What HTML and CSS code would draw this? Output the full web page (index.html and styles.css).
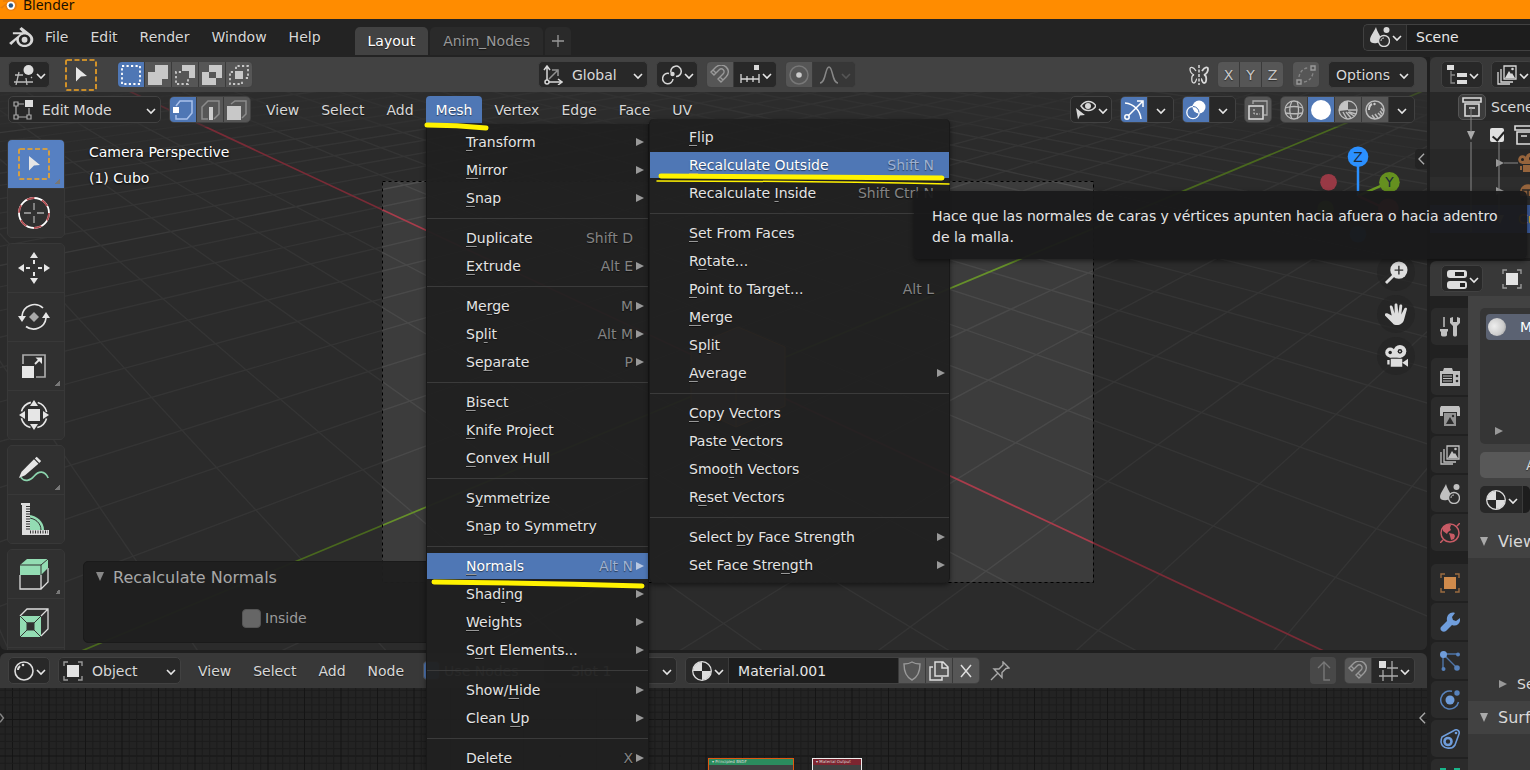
FILE: index.html
```html
<!DOCTYPE html>
<html lang="en">
<head>
    <meta charset="UTF-8">
    <meta name="viewport" content="width=device-width, initial-scale=1.0">
    <title>Blender</title>
    <link rel="stylesheet" href="styles.css">
</head>
<body>

    <!-- icon sprite -->
    <svg class="sprite" aria-hidden="true">
        <symbol id="chev" viewBox="0 0 10 20"><path d="M1 9l4 4 4-4" fill="none" stroke="currentColor" stroke-width="1.600"/></symbol>
        <symbol id="logo" viewBox="0 0 24 24"><path d="M1 17.500L11 9.500H4.500V7.500h9L10.500 4.500l2-1.800 8.200 6.500c2 1.700 3 3.700 2.600 6-.6 3.600-4 6-8 6-4.200 0-7.500-2.700-7.700-6.500L3 19.300zM15.300 9.800c-3 0-5.300 2-5.300 4.700s2.400 4.700 5.300 4.700 5.300-2 5.300-4.700-2.400-4.700-5.300-4.700z" fill="currentColor" fill-rule="evenodd"/><circle cx="15.300" cy="14.500" r="2.700" fill="currentColor"/></symbol>
        <symbol id="view3d" viewBox="0 0 20 20"><g fill="none" stroke="#bbb" stroke-width="1.300"><path d="M1 10h8M0 17h19M5 7L2 20M12 13l1 7M17 12l1 1"/></g><circle cx="14.500" cy="5" r="5" fill="#ddd"/></symbol>
        <symbol id="selbox" viewBox="0 0 32 32"><rect x="1" y="1" width="30" height="30" rx="1" fill="none" stroke="#f5a623" stroke-width="1.600" stroke-dasharray="5 2.500"/><path d="M11 8l11 9-6 .4-5 5z" fill="#e6e6e6"/></symbol>
        <symbol id="m-new" viewBox="0 0 20 20"><rect x="1" y="1" width="18" height="18" fill="none" stroke="#fff" stroke-width="1.800" stroke-dasharray="2.200 2.300"/></symbol>
        <symbol id="m-add" viewBox="0 0 20 20"><path d="M7 0h13v14h-6v6H0V7h7z" fill="currentColor"/></symbol>
        <symbol id="m-sub" viewBox="0 0 20 20"><path d="M7 0h13v13h-6V6H7z" fill="currentColor"/><path d="M6 7H1v12h12v-5" fill="none" stroke="currentColor" stroke-width="1.800" stroke-dasharray="2.200 2.300"/></symbol>
        <symbol id="m-dif" viewBox="0 0 20 20"><path d="M7 0h13v13h-6v7H0V7h7zM7 7v6h7V7z" fill="currentColor" fill-rule="evenodd"/></symbol>
        <symbol id="m-int" viewBox="0 0 20 20"><path d="M6 6h8v8H6z" fill="currentColor"/><path d="M7 4V1h12v12h-3M4 7H1v12h12v-3" fill="none" stroke="currentColor" stroke-width="1.800" stroke-dasharray="2.200 2.300"/></symbol>
        <symbol id="orient" viewBox="0 0 20 20"><g fill="none" stroke="currentColor" stroke-width="1.500"><path d="M4 15V2M1 5l3-4 3 4M6 17h12M15 14l4 3-4 3"/><circle cx="4" cy="17" r="2"/><path d="M6 14l8-8M9 5h6v6" opacity=".6"/></g></symbol>
        <symbol id="pivot" viewBox="0 0 20 20"><g fill="none" stroke="currentColor" stroke-width="1.500"><path d="M9 7.500A5.200 5.200 0 1 1 14 11.500"/><path d="M7 8.500A5.200 5.200 0 1 0 11 14"/></g><circle cx="10.500" cy="9" r="2.200" fill="currentColor"/></symbol>
        <symbol id="magnet" viewBox="0 0 20 20"><path d="M1 7l3 3 5-5c3-3 7 1 4 4l-5 5 3 3 5-5c7-7-3-16-10-10zM3 5l3 3M10 12l3 3" fill="none" stroke="#999" stroke-width="1.400"/></symbol>
        <symbol id="incr" viewBox="0 0 20 20"><path d="M1 9v9M19 9v9M7 11v6M13 11v6M1 14h18" stroke="currentColor" stroke-width="1.300"/><path d="M14 0h5v5h-5z" fill="currentColor"/></symbol>
        <symbol id="prop" viewBox="0 0 20 20"><circle cx="10" cy="10" r="9" fill="none" stroke="#777" stroke-width="1.500"/><circle cx="10" cy="10" r="2.800" fill="#ccc"/></symbol>
        <symbol id="falloff" viewBox="0 0 20 20"><path d="M1 18c6 0 5-16 9-16s3 16 9 16" fill="none" stroke="currentColor" stroke-width="1.500"/></symbol>
        <symbol id="butterfly" viewBox="0 0 20 20"><path d="M7 6C4 1 1 2 1 4c0 4 2 5 4 6-3 0-3 8 0 8 2 0 2-4 3-4" fill="none" stroke="currentColor" stroke-width="1.300"/><path d="M13 6c3-5 6-4 6-2 0 4-2 5-4 6 3 0 3 8 0 8-2 0-2-4-3-4" fill="none" stroke="currentColor" stroke-width="1.800"/><path d="M10 0v20" stroke="currentColor" stroke-width="1.500" stroke-dasharray="3 1.500"/></symbol>
        <symbol id="automerge" viewBox="0 0 20 20"><g fill="none" stroke="#999" stroke-width="1.400"><path d="M1 15h4v4H1zM15 1h4v4h-4z"/><path d="M3 12C4 6 8 3 12 3M8 17c5-1 8-4 9-9" stroke-dasharray="3 2" opacity=".7"/></g></symbol>
        <symbol id="editmode" viewBox="0 0 20 20"><g fill="none" stroke="#aaa" stroke-width="1.200"><path d="M1 2h4v4H1zM1 15h4v4H1zM14 15h4v4h-4zM3 6v9M5 17h9M5 4h6M16 8v7"/></g><path d="M12 0h8v7h-8z" fill="#ddd"/></symbol>
        <symbol id="vert" viewBox="0 0 20 20"><path d="M3 6l4-5h12v12l-5 6H3v-4" fill="none" stroke="#a9c1ea" stroke-width="1.500"/><path d="M0 7h6v6H0z" fill="#fff"/></symbol>
        <symbol id="edge" viewBox="0 0 20 20"><path d="M8 19H2V7l6-6h11v13l-5 5" fill="none" stroke="#8c8c8c" stroke-width="1.500"/><path d="M9 7h4v13H9z" fill="#ccc"/></symbol>
        <symbol id="face" viewBox="0 0 20 20"><path d="M4 4l4-3h11v13l-4 4" fill="none" stroke="#8c8c8c" stroke-width="1.500"/><path d="M0 6h14v14H0z" fill="#c8c8c8"/></symbol>
        <symbol id="eye" viewBox="0 0 20 20"><path d="M5 6c4-6 11-6 15 0-4 6-11 6-15 0z" fill="none" stroke="currentColor" stroke-width="1.500"/><circle cx="12" cy="6" r="3" fill="currentColor"/><path d="M0 8l9 7-5 .5-2 4z" fill="currentColor"/></symbol>
        <symbol id="gizmo" viewBox="0 0 20 20"><g fill="none" stroke="#fff" stroke-width="1.500"><path d="M1 3c9 1 15 7 16 16M4 16L18 2M13 1h6v6"/><circle cx="3" cy="17" r="2.200"/></g></symbol>
        <symbol id="overlay" viewBox="0 0 20 20"><circle cx="13" cy="7" r="6.500" fill="#fff"/><circle cx="7" cy="12.500" r="6.200" fill="none" stroke="#fff" stroke-width="1.300"/><path d="M7 6.500a6 6 0 0 1 6 6" stroke="#4772b3" fill="none"/></symbol>
        <symbol id="xray" viewBox="0 0 20 20"><path d="M1 6h14v13H1z" fill="none" stroke="#ddd" stroke-width="1.500"/><path d="M5 4V1h14v14h-3" fill="none" stroke="#aaa" stroke-width="1.300"/><path d="M6 9v5h6" fill="none" stroke="#ddd" stroke-dasharray="2 1.500"/></symbol>
        <symbol id="wire" viewBox="0 0 20 20"><g fill="none" stroke="#bbb" stroke-width="1.300"><circle cx="10" cy="10" r="9"/><path d="M8 1c-3 6-3 12 0 18M1 8c6-2 12-2 18 0M13 1c2 6 2 12 0 18M1 13c6 1 12 1 18 0"/></g></symbol>
        <symbol id="solid" viewBox="0 0 20 20"><circle cx="10" cy="10" r="10" fill="#fff"/></symbol>
        <symbol id="matprev" viewBox="0 0 20 20"><circle cx="10" cy="10" r="9" fill="none" stroke="#bbb" stroke-width="1.300"/><path d="M10 10V1a9 9 0 0 0-9 10z" fill="#c4c4c4"/><path d="M10 10h9M11 12l7 2M10 12l6 4M8 12l5 6M5 12l4 7" fill="none" stroke="#bbb" stroke-width="1.500"/></symbol>
        <symbol id="rendered" viewBox="0 0 20 20"><circle cx="10" cy="10" r="9" fill="none" stroke="#bbb" stroke-width="1.500"/><path d="M4 10c0-3 1-5 3-6" fill="none" stroke="#ccc" stroke-width="2"/><circle cx="9.500" cy="4" r="1.200" fill="#ccc"/><path d="M16 8l2 3M15 11l2 3M13 13l3 3M10 14l3 4M7 15l3 4" fill="none" stroke="#bbb" stroke-width="1.500"/></symbol>
        <symbol id="sphere" viewBox="0 0 20 20"><circle cx="10" cy="10" r="9" fill="none" stroke="#ddd" stroke-width="1.600"/><path d="M4 9c0-2 1-3 2-4" fill="none" stroke="#ddd" stroke-width="2"/><circle cx="9" cy="4" r="1.300" fill="#ddd"/></symbol>
        <symbol id="object" viewBox="0 0 20 20"><path d="M4 4h12v12H4z" fill="#e2e2e2"/><path d="M1 5V1h4M15 1h4v4M19 15v4h-4M5 19H1v-4" fill="none" stroke="#999" stroke-width="1.400"/></symbol>
        <symbol id="material" viewBox="0 0 20 20"><circle cx="10" cy="10" r="9.300" fill="none" stroke="#ddd" stroke-width="1.300"/><path d="M10 1v9H1a9 9 0 0 1 9-9zM10 10h9a9 9 0 0 1-9 9z" fill="#ddd"/></symbol>
        <symbol id="scene" viewBox="0 0 20 20"><path d="M6 0c1 5 5 9 5 12 0 5-11 6-11 1C0 9 4 5 6 0z" fill="currentColor"/><circle cx="16.500" cy="3" r="3" fill="currentColor"/><circle cx="14" cy="14" r="5.500" fill="#2b2b2b" stroke="currentColor" stroke-width="1.400"/><path d="M11 14c0-2 1-3 3-3" stroke="currentColor" fill="none"/></symbol>
        <symbol id="shield" viewBox="0 0 20 20"><path d="M10 1c3 2 6 2 8 2 0 8-2 13-8 16C4 16 2 11 2 3c2 0 5 0 8-2z" fill="none" stroke="#999" stroke-width="1.400"/></symbol>
        <symbol id="copy" viewBox="0 0 20 20"><g fill="none" stroke="#ddd" stroke-width="1.500"><path d="M6 1h8l5 5v9H6zM13 1v6h6"/><path d="M4 6H1v13h12v-3"/></g></symbol>
        <symbol id="close" viewBox="0 0 20 20"><path d="M5 4l10 12M15 4L5 16" stroke="#ddd" stroke-width="1.500"/></symbol>
        <symbol id="pin" viewBox="0 0 20 20"><path d="M13 1l6 6-3 .5-4 4 0 5L4 8l5 0 4-4zM8 12l-7 7" fill="none" stroke="#aaa" stroke-width="1.400"/></symbol>
        <symbol id="up" viewBox="0 0 20 20"><path d="M17 19h-6V1M5 7l6-6 6 6" fill="none" stroke="#777" stroke-width="1.400"/></symbol>
        <symbol id="gridsnap" viewBox="0 0 20 20"><path d="M1 15h19M9 7h11M5 9v11M14 0v20" stroke="#aaa" stroke-width="1.300"/><path d="M1 0h7v7H1z" fill="#ddd"/></symbol>
        <symbol id="tree" viewBox="0 0 20 20"><path d="M0 0h7v5H0zM10 8h10v4H10zM10 15h10v4H10z" fill="#ddd"/><path d="M4 6v12h4M4 10h4" fill="none" stroke="#888" stroke-width="1.300"/></symbol>
        <symbol id="images" viewBox="0 0 20 20"><path d="M7 1h12v13H7zM4 4v13h12M1 7v12h12" fill="none" stroke="currentColor" stroke-width="1.300"/><path d="M8 13l4-7 2 3 1-1 3 5z" fill="currentColor"/><circle cx="15.500" cy="4" r="1.300" fill="currentColor"/></symbol>
        <symbol id="box" viewBox="0 0 20 20"><path d="M1 1h18v4H1zM3 7h14v12H3zM7 11h6" fill="none" stroke="#ddd" stroke-width="1.600"/></symbol>
        <symbol id="camera" viewBox="0 0 20 20"><path d="M5 12h10v7H5zM2 13h2v4H2zM20 12v7l-5-3.500z" fill="currentColor"/><circle cx="4.500" cy="6.500" r="4.300" fill="currentColor"/><circle cx="13" cy="5.500" r="5.500" fill="currentColor"/><path d="M4 7h10v4H4z" fill="currentColor"/><circle cx="4.500" cy="6.500" r="1.500" fill="#222"/><circle cx="13" cy="5.500" r="2" fill="#222"/><circle cx="13" cy="5.500" r=".8" fill="currentColor"/></symbol>
        <symbol id="light" viewBox="0 0 20 20"><path d="M3 15a8 8 0 1 1 14 0H3z" fill="currentColor"/><path d="M4 9h12M10 9v6M6 18h8" stroke="#282828" stroke-width="1.500"/></symbol>
        <symbol id="props" viewBox="0 0 20 20"><rect y="1" width="20" height="8" rx="3" fill="#ddd"/><rect y="12" width="20" height="8" rx="3" fill="#ddd"/><path d="M8 3h9v4H8zM13 14h5v4h-5z" fill="#222"/></symbol>
        <symbol id="tools" viewBox="0 0 20 20"><path d="M4 0v10" stroke="currentColor" stroke-width="1.500"/><path d="M0 12h8v2l-1 1v3c0 2-6 2-6 0v-3l-1-1z" fill="currentColor"/><path d="M10 1v5l3 3v9c0 2 4 2 4 0V9l3-3V1l-3-1v5h-4V0z" fill="currentColor"/></symbol>
        <symbol id="render" viewBox="0 0 20 20"><path d="M4 1h8l1 3h7v15H0V4h3z" fill="currentColor"/><path d="M2 7h11v9H2z" fill="#2b2b2b"/><path d="M3 9h9M3 11.500h9M3 14h9" stroke="currentColor"/><circle cx="17" cy="9" r="1.300" fill="#2b2b2b"/><circle cx="17" cy="14" r="1.300" fill="#2b2b2b"/></symbol>
        <symbol id="output" viewBox="0 0 20 20"><path d="M1 0h18l1 2v8h-3V6H3v4H0V2z" fill="currentColor"/><path d="M4 7h12v13H4z" fill="currentColor" opacity=".7"/><path d="M6 18l4-7 4 7z" fill="#2b2b2b"/><circle cx="13" cy="10" r="1.200" fill="#2b2b2b"/></symbol>
        <symbol id="world" viewBox="0 0 20 20"><circle cx="10" cy="10" r="9" fill="none" stroke="#c85b65" stroke-width="1.500"/><path d="M3 4c3-3 6-3 8-2l-1 3 1 2-3 2-1 2-4-3zM9 10l5 1 1 2-1 3-3 1-1-4z" fill="#c85b65"/><path d="M0 20l3-3M20 0l-3 3" stroke="#c85b65" stroke-width="1.500"/></symbol>
        <symbol id="objtab" viewBox="0 0 20 20"><path d="M4 4h12v12H4z" fill="#d08b4c"/><path d="M1 5V1h4M15 1h4v4M19 15v4h-4M5 19H1v-4" fill="none" stroke="#9c6c40" stroke-width="1.400"/></symbol>
        <symbol id="wrench" viewBox="0 0 20 20"><path d="M1 15l6-6c-1-5 3-10 8-8l-3 4 1 3 3 1 4-3c1 5-3 9-8 7l-6 6c-3 2-7-1-5-4z" fill="#6f9ddb"/></symbol>
        <symbol id="particles" viewBox="0 0 20 20"><path d="M3 3h15M4 4l13 13M3 4v14" stroke="#4f75a8" stroke-width="1.400"/><circle cx="3.500" cy="3.500" r="3.500" fill="#6f9ddb"/><g fill="#5681bb"><circle cx="18" cy="3.500" r="2"/><circle cx="3.500" cy="18" r="2"/><circle cx="17" cy="17" r="2.800"/></g></symbol>
        <symbol id="physics" viewBox="0 0 20 20"><path d="M12 1.300A9 9 0 1 0 18.500 12" fill="none" stroke="#5681bb" stroke-width="1.500"/><circle cx="10" cy="10" r="4.500" fill="#6f9ddb"/><circle cx="17" cy="3" r="2.700" fill="#5681bb"/></symbol>
        <symbol id="constraint" viewBox="0 0 20 20"><path d="M2 8L15 1c3-1 5 2 4 4l-4 11c-3 5-13 4-14-3 0-2 0-3 1-5z" fill="none" stroke="#6f9ddb" stroke-width="1.600"/><circle cx="8" cy="12.500" r="3.500" fill="none" stroke="#6f9ddb" stroke-width="2.600"/><circle cx="16" cy="4" r="1.300" fill="#6f9ddb"/></symbol>
        <symbol id="meshtab" viewBox="0 0 20 20"><path d="M3 3h14M3 3l7 14 7-14" fill="none" stroke="#19b58a" stroke-width="1.500"/><path d="M0 0h6v6H0zM14 0h6v6h-6z" fill="#19b58a"/></symbol>
        <symbol id="t-cursor" viewBox="0 0 32 32"><circle cx="16" cy="16" r="15" fill="none" stroke="#fff" stroke-width="1.800"/><circle cx="16" cy="16" r="15" fill="none" stroke="#b04b50" stroke-width="1.800" stroke-dasharray="7.850 7.850"/><path d="M16 6v7M16 19v7M6 16h7M19 16h7" stroke="#aaa" stroke-width="1.300"/></symbol>
        <symbol id="t-move" viewBox="0 0 32 32"><g fill="#e6e6e6"><path d="M16 0l4 6h-8zM16 32l4-6h-8zM0 16l6-4v8zM32 16l-6-4v8z"/><path d="M15 8h2v4h-2zM15 20h2v4h-2zM8 15h4v2H8zM20 15h4v2h-4z"/></g></symbol>
        <symbol id="t-rotate" viewBox="0 0 32 32"><path d="M4 15A12.500 12.500 0 0 1 25 7M28 17A12.500 12.500 0 0 1 8 25.500" fill="none" stroke="#e6e6e6" stroke-width="1.700"/><path d="M0 15h8l-4 6zM24 17h8l-4-6z" fill="#e6e6e6"/><path d="M16 11l5 5-5 5-5-5z" fill="#aaa"/></symbol>
        <symbol id="t-scale" viewBox="0 0 32 32"><path d="M5 14V5h22v22h-9" fill="none" stroke="#aaa" stroke-width="1.700"/><path d="M4 16h12v12H4z" fill="#e6e6e6"/><path d="M17 14l5-5" stroke="#e6e6e6" stroke-width="1.800"/><path d="M17.500 7.500H24V14z" fill="#e6e6e6"/></symbol>
        <symbol id="t-trans" viewBox="0 0 32 32"><circle cx="16" cy="16" r="13" fill="none" stroke="#e6e6e6" stroke-width="1.600" stroke-dasharray="13.400 7" stroke-dashoffset="-3.500"/><path d="M10 10h12v12H10zM16 1l4 6h-8zM16 31l4-6h-8zM1 16l6-4v8zM31 16l-6-4v8z" fill="#e6e6e6"/></symbol>
        <symbol id="t-annot" viewBox="0 0 36 32"><path d="M1 25l3-7L18 4l5 5L8 22z" fill="#e6e6e6"/><path d="M19 3l2-2 5 5-2 2z" fill="#e6e6e6"/><path d="M3 24c4 6 11 4 15-1 5-6 12-7 16 2" fill="none" stroke="#8bd4ad" stroke-width="1.800"/></symbol>
        <symbol id="t-measure" viewBox="0 0 32 32"><path d="M10 12c9 0 16 7 16 15H10z" fill="#93dcb3"/><path d="M10 15c7 0 13 5 13 12" fill="none" stroke="#2e2e2e"/><path d="M3 0h9v27h19v5H4V2H3z" fill="#ddd"/><path d="M10 3v24" stroke="#333" stroke-width="4" stroke-dasharray="1 1.500"/><path d="M12 29h18" stroke="#333" stroke-width="3" stroke-dasharray="1 1.500"/></symbol>
        <symbol id="t-extrude" viewBox="0 0 32 32"><path d="M2 17v14h21V17M23 31l7-7V10" fill="none" stroke="#ddd" stroke-width="1.300"/><path d="M2 7l7-6h21v9l-7 7H2z" fill="#93dcb3"/><path d="M2 7h21v10M23 7l7-6" fill="none" stroke="#333"/></symbol>
        <symbol id="t-inset" viewBox="0 0 32 32"><path d="M2 9l7-7h21v20l-7 7M23 9l7-7" fill="none" stroke="#ddd" stroke-width="1.300"/><path d="M2 9h21v21H2zM9 16v7h7v-7z" fill="#93dcb3" fill-rule="evenodd"/><path d="M2 9l7 7h7l7-7M2 30l7-7M23 30l-7-7M9 16v7h7v-7z" fill="none" stroke="#333"/></symbol>
        <symbol id="n-zoom" viewBox="0 0 24 24"><path d="M1 23l9-9" stroke="#ddd" stroke-width="3"/><circle cx="14.500" cy="9.500" r="9" fill="#ddd"/><path d="M14.500 5v9M10 9.500h9" stroke="#333" stroke-width="1.500"/></symbol>
        <symbol id="n-hand" viewBox="0 0 24 24"><path d="M7 13L5 4c0-2 2-2 3 0l2 7V2c0-2 3-2 3 0l1 9 1-8c0-2 3-2 3 0l-1 9 3-6c1-2 3-1 3 0l-3 11c-1 6-9 8-12 4L0 13c-1-2 1-3 3-2z" fill="#ddd"/></symbol>
    </svg>

    <header class="titlebar">
        <svg class="title-logo" viewBox="0 0 24 24"><path d="M0 17L11 9H4V7h9L10 3l2-1 8 6c5 4 3 13-5 13-5 0-8-3-8-7l-4 4z" fill="#e87d0d"/><circle cx="14.500" cy="14" r="5.500" fill="#fff"/><circle cx="14.500" cy="14" r="3" fill="#265787"/></svg>
        <span>Blender</span>
    </header>

    <div class="topbar">
        <svg class="logo"><use href="#logo"/></svg>
        <nav class="menus">
            <button>File</button><button>Edit</button><button>Render</button><button>Window</button><button>Help</button>
        </nav>
        <div class="tabs">
            <button class="tab active">Layout</button><button class="tab">Anim_Nodes</button><button class="tab plus" aria-label="Add workspace"><svg viewBox="0 0 14 14"><path d="M7 1v12M1 7h12" stroke="#999" stroke-width="1.300"/></svg></button>
        </div>
        <div class="group scene-pick">
            <button class="pick" aria-label="Browse scene"><svg class="icon"><use href="#scene"/></svg><svg class="chev"><use href="#chev"/></svg></button>
            <input type="text" value="Scene" aria-label="Scene name">
        </div>
    </div>

    <main class="workspace">
        <div class="left">
            <div class="bar tool-settings">
                <div class="cluster">
                    <button class="pick box" aria-label="Editor type"><svg class="icon"><use href="#view3d"/></svg><svg class="chev"><use href="#chev"/></svg></button>
                    <svg class="active-tool"><use href="#selbox"/></svg>
                    <div class="group">
                        <button class="cell on" aria-label="Set"><svg class="icon"><use href="#m-new"/></svg></button>
                        <button class="cell" aria-label="Extend"><svg class="icon"><use href="#m-add"/></svg></button>
                        <button class="cell" aria-label="Subtract"><svg class="icon"><use href="#m-sub"/></svg></button>
                        <button class="cell" aria-label="Difference"><svg class="icon"><use href="#m-dif"/></svg></button>
                        <button class="cell" aria-label="Intersect"><svg class="icon"><use href="#m-int"/></svg></button>
                    </div>
                </div>
                <div class="cluster">
                    <label class="dropdown orient"><svg class="icon"><use href="#orient"/></svg><select aria-label="Orientation"><option>Global</option></select><svg class="chev"><use href="#chev"/></svg></label>
                    <button class="pick box" aria-label="Pivot"><svg class="icon"><use href="#pivot"/></svg><svg class="chev"><use href="#chev"/></svg></button>
                    <div class="group">
                        <button class="cell" aria-label="Snap"><svg class="icon"><use href="#magnet"/></svg></button>
                        <button class="pick" aria-label="Snap to"><svg class="icon"><use href="#incr"/></svg><svg class="chev"><use href="#chev"/></svg></button>
                    </div>
                    <div class="group">
                        <button class="cell" aria-label="Proportional editing"><svg class="icon"><use href="#prop"/></svg></button>
                        <button class="pick dim" aria-label="Falloff"><svg class="icon"><use href="#falloff"/></svg><svg class="chev"><use href="#chev"/></svg></button>
                    </div>
                </div>
                <div class="cluster end">
                    <svg class="icon mirror"><use href="#butterfly"/></svg>
                    <div class="group xyz"><button class="cell">X</button><button class="cell">Y</button><button class="cell">Z</button></div>
                    <div class="group"><button class="cell" aria-label="Auto merge"><svg class="icon"><use href="#automerge"/></svg></button></div>
                    <button class="pick box options">Options<svg class="chev"><use href="#chev"/></svg></button>
                </div>
            </div>

            <section class="viewport">
                <!-- floor grid lines are added by script.js -->
                <svg class="scene" viewBox="0 92 1427 558" preserveAspectRatio="xMidYMid slice">
                    <rect y="92" width="1427" height="558" fill="#3c3c3c"/>
                    <g id="floor"></g>
                    <path d="M691 347l47-20 47 20v59l-49 21-45-21z" fill="#77706e"/>
                    <path d="M691 347l47-20 47 20v59l-49 21-45-21zM736 372v55" fill="none" stroke="#f08030"/>
                    <path d="M0 92h1427v558H0zM382 181v401h711V181z" fill="#000" fill-opacity=".28" fill-rule="evenodd"/>
                    <rect x="382.500" y="181.500" width="711" height="401" fill="none" stroke="#000" stroke-dasharray="3 3"/>
                </svg>
                <div class="view-header">
                    <label class="dropdown mode"><svg class="icon"><use href="#editmode"/></svg><select aria-label="Mode"><option>Edit Mode</option></select><svg class="chev"><use href="#chev"/></svg></label>
                    <div class="group">
                        <button class="cell on" aria-label="Vertex select"><svg class="icon"><use href="#vert"/></svg></button>
                        <button class="cell" aria-label="Edge select"><svg class="icon"><use href="#edge"/></svg></button>
                        <button class="cell" aria-label="Face select"><svg class="icon"><use href="#face"/></svg></button>
                    </div>
                    <nav class="menus">
                        <button>View</button><button>Select</button><button>Add</button><button class="open">Mesh</button><button>Vertex</button><button>Edge</button><button>Face</button><button>UV</button>
                    </nav>
                    <div class="cluster end">
                        <button class="pick box" aria-label="Visibility"><svg class="icon"><use href="#eye"/></svg><svg class="chev"><use href="#chev"/></svg></button>
                        <div class="group"><button class="cell on" aria-label="Gizmos"><svg class="icon"><use href="#gizmo"/></svg></button><button class="pick more" aria-label="Gizmo options"><svg class="chev"><use href="#chev"/></svg></button></div>
                        <div class="group"><button class="cell on" aria-label="Overlays"><svg class="icon"><use href="#overlay"/></svg></button><button class="pick more" aria-label="Overlay options"><svg class="chev"><use href="#chev"/></svg></button></div>
                        <div class="group"><button class="cell" aria-label="X-ray"><svg class="icon"><use href="#xray"/></svg></button></div>
                        <div class="group">
                            <button class="cell" aria-label="Wireframe"><svg class="icon"><use href="#wire"/></svg></button>
                            <button class="cell on" aria-label="Solid"><svg class="icon"><use href="#solid"/></svg></button>
                            <button class="cell" aria-label="Material preview"><svg class="icon"><use href="#matprev"/></svg></button>
                            <button class="cell" aria-label="Rendered"><svg class="icon"><use href="#rendered"/></svg></button>
                            <button class="pick more" aria-label="Shading options"><svg class="chev"><use href="#chev"/></svg></button>
                        </div>
                    </div>
                </div>
                <div class="view-body">
                    <div class="toolbar">
                        <div class="tool-group">
                            <button class="on more-tools" aria-label="Select box"><svg><use href="#selbox"/></svg></button>
                            <button aria-label="Cursor"><svg><use href="#t-cursor"/></svg></button>
                        </div>
                        <div class="tool-group">
                            <button aria-label="Move"><svg><use href="#t-move"/></svg></button>
                            <button aria-label="Rotate"><svg><use href="#t-rotate"/></svg></button>
                            <button class="more-tools" aria-label="Scale"><svg><use href="#t-scale"/></svg></button>
                            <button aria-label="Transform"><svg><use href="#t-trans"/></svg></button>
                        </div>
                        <div class="tool-group">
                            <button class="more-tools" aria-label="Annotate"><svg><use href="#t-annot"/></svg></button>
                            <button aria-label="Measure"><svg><use href="#t-measure"/></svg></button>
                        </div>
                        <div class="tool-group">
                            <button class="more-tools" aria-label="Extrude"><svg><use href="#t-extrude"/></svg></button>
                            <button aria-label="Inset"><svg><use href="#t-inset"/></svg></button>
                            <button aria-label="Bevel"></button>
                        </div>
                    </div>
                    <div class="view-info">Camera Perspective<br>(1) Cubo</div>
                    <div class="nav">
                        <svg class="axes" viewBox="0 0 100 110">
                            <path d="M50 20v36" stroke="#2b90ff" stroke-width="2.500"/><path d="M50 56l32-14" stroke="#6b9a22" stroke-width="2.500"/><path d="M50 56l30 14" stroke="#a83545" stroke-width="2.500"/>
                            <circle cx="50" cy="95" r="8.500" fill="#234f80"/><circle cx="17" cy="69" r="8.500" fill="#4f6f1b"/><circle cx="81" cy="69" r="10.500" fill="#b03848"/>
                            <circle cx="50" cy="16" r="10.500" fill="#2b90ff"/><circle cx="20" cy="42" r="8.500" fill="#983945"/><circle cx="82" cy="42" r="10.500" fill="#65901f"/>
                            <text x="50" y="21">Z</text><text x="82" y="47">Y</text>
                        </svg>
                        <button aria-label="Zoom"><svg><use href="#n-zoom"/></svg></button>
                        <button aria-label="Pan"><svg><use href="#n-hand"/></svg></button>
                        <button aria-label="Camera view"><svg><use href="#camera"/></svg></button>
                    </div>
                    <button class="side-tab" aria-label="Show sidebar"><svg viewBox="0 0 8 14"><path d="M7 1L1 7l6 6" fill="none" stroke="#aaa" stroke-width="1.600"/></svg></button>
                </div>
                <div class="redo-panel">
                    <h2>Recalculate Normals</h2>
                    <label><input type="checkbox">Inside</label>
                </div>
            </section>

            <section class="node-editor">
                <div class="bar node-bar">
                    <button class="pick box" aria-label="Editor type"><svg class="icon"><use href="#sphere"/></svg><svg class="chev"><use href="#chev"/></svg></button>
                    <label class="dropdown shader-type"><svg class="icon"><use href="#object"/></svg><select aria-label="Shader type"><option>Object</option></select><svg class="chev"><use href="#chev"/></svg></label>
                    <nav class="menus"><button>View</button><button>Select</button><button>Add</button><button>Node</button></nav>
                    <label class="use-nodes"><input type="checkbox" checked>Use Nodes</label>
                    <label class="dropdown slot"><select aria-label="Slot"><option>Slot 1</option></select><svg class="chev"><use href="#chev"/></svg></label>
                    <div class="group material">
                        <button class="pick" aria-label="Browse material"><svg class="icon"><use href="#material"/></svg><svg class="chev"><use href="#chev"/></svg></button>
                        <input type="text" value="Material.001" aria-label="Material name">
                        <button class="cell" aria-label="Fake user"><svg class="icon"><use href="#shield"/></svg></button>
                        <button class="cell" aria-label="New material"><svg class="icon"><use href="#copy"/></svg></button>
                        <button class="cell" aria-label="Unlink"><svg class="icon"><use href="#close"/></svg></button>
                    </div>
                    <button class="pin" aria-label="Pin"><svg class="icon"><use href="#pin"/></svg></button>
                    <div class="cluster end">
                        <button class="cell solo" aria-label="Parent tree"><svg class="icon"><use href="#up"/></svg></button>
                        <div class="group">
                            <button class="cell" aria-label="Snap"><svg class="icon"><use href="#magnet"/></svg></button>
                            <button class="pick" aria-label="Snap element"><svg class="icon"><use href="#gridsnap"/></svg><svg class="chev"><use href="#chev"/></svg></button>
                        </div>
                    </div>
                </div>
                <div class="node-canvas">
                    <svg class="node-grid" id="nodeGrid"></svg>
                    <div class="node principled"><span>▾ Principled BSDF</span></div>
                    <div class="node output"><span>▾ Material Output</span></div>
                    <svg class="edge-arrow start" viewBox="0 0 8 14"><path d="M0 2l4 5-4 5" fill="none" stroke="#888" stroke-width="1.600"/></svg>
                    <svg class="edge-arrow finish" viewBox="0 0 8 14"><path d="M7 1L1 7l6 6" fill="none" stroke="#aaa" stroke-width="1.600"/></svg>
                </div>
            </section>
        </div>

        <aside class="right">
            <section class="outliner">
                <div class="bar">
                    <button class="pick box" aria-label="Editor type"><svg class="icon"><use href="#tree"/></svg><svg class="chev"><use href="#chev"/></svg></button>
                    <button class="pick box" aria-label="Display mode"><svg class="icon"><use href="#images"/></svg><svg class="chev"><use href="#chev"/></svg></button>
                </div>
                <ul class="tree">
                    <li class="root"><span class="badge"><svg class="icon"><use href="#box"/></svg></span>Scene Collection</li>
                    <li class="lvl1"><i class="tri down"></i><input type="checkbox" checked aria-label="Include collection"><svg class="icon"><use href="#box"/></svg></li>
                    <li class="lvl2"><i class="tri"></i><svg class="icon"><use href="#camera"/></svg></li>
                    <li class="lvl2"><i class="tri"></i><svg class="icon"><use href="#light"/></svg></li>
                    <li class="lvl2 selected"><i class="tri down"></i><span>Cubo</span></li>
                </ul>
                <svg class="tree-lines" viewBox="0 0 100 170"><path d="M41 16v24M41 50v90M69 50v80M74 71h14" stroke="#888" fill="none"/></svg>
            </section>
            <section class="properties">
                <div class="bar">
                    <button class="pick box" aria-label="Editor type"><svg class="icon"><use href="#props"/></svg><svg class="chev"><use href="#chev"/></svg></button>
                    <svg class="icon crumb"><use href="#object"/></svg>
                </div>
                <div class="props-body">
                    <nav class="prop-tabs">
                        <button class="last" aria-label="Tool"><svg class="icon"><use href="#tools"/></svg></button>
                        <button aria-label="Render"><svg class="icon"><use href="#render"/></svg></button>
                        <button aria-label="Output"><svg class="icon"><use href="#output"/></svg></button>
                        <button aria-label="View layer"><svg class="icon"><use href="#images"/></svg></button>
                        <button aria-label="Scene"><svg class="icon"><use href="#scene"/></svg></button>
                        <button class="last" aria-label="World"><svg class="icon"><use href="#world"/></svg></button>
                        <button aria-label="Object"><svg class="icon"><use href="#objtab"/></svg></button>
                        <button aria-label="Modifiers"><svg class="icon"><use href="#wrench"/></svg></button>
                        <button aria-label="Particles"><svg class="icon"><use href="#particles"/></svg></button>
                        <button aria-label="Physics"><svg class="icon"><use href="#physics"/></svg></button>
                        <button aria-label="Constraints"><svg class="icon"><use href="#constraint"/></svg></button>
                        <button aria-label="Mesh data"><svg class="icon"><use href="#meshtab"/></svg></button>
                    </nav>
                    <div class="prop-panels">
                        <div class="slots"><div class="slot-row"><i class="ball"></i>Material.001</div><i class="tri"></i></div>
                        <button class="assign">Assign</button>
                        <div class="group mat"><button class="pick" aria-label="Browse material"><svg class="icon"><use href="#material"/></svg><svg class="chev"><use href="#chev"/></svg></button><input type="text" aria-label="Material"></div>
                        <h3 class="panel-head"><i class="tri down"></i>Viewport Display</h3>
                        <div class="panel-body"><div class="sub-head"><i class="tri"></i>Settings</div></div>
                        <h3 class="panel-head"><i class="tri down"></i>Surface</h3>
                        <div class="panel-body"></div>
                    </div>
                </div>
            </section>
        </aside>
    </main>

    <!-- open menus -->
    <div class="popup mesh-menu" role="menu">
        <button><span><u>T</u>ransform</span><i class="tri"></i></button>
        <button><span><u>M</u>irror</span><i class="tri"></i></button>
        <button><span><u>S</u>nap</span><i class="tri"></i></button>
        <hr>
        <button><span><u>D</u>uplicate</span><kbd>Shift D</kbd></button>
        <button><span><u>E</u>xtrude</span><kbd>Alt E</kbd><i class="tri"></i></button>
        <hr>
        <button><span>Me<u>r</u>ge</span><kbd>M</kbd><i class="tri"></i></button>
        <button><span>Sp<u>l</u>it</span><kbd>Alt M</kbd><i class="tri"></i></button>
        <button><span>Se<u>p</u>arate</span><kbd>P</kbd><i class="tri"></i></button>
        <hr>
        <button><span><u>B</u>isect</span></button>
        <button><span><u>K</u>nife Project</span></button>
        <button><span><u>C</u>onvex Hull</span></button>
        <hr>
        <button><span>S<u>y</u>mmetrize</span></button>
        <button><span>Sn<u>a</u>p to Symmetry</span></button>
        <hr>
        <button class="hot"><span><u>N</u>ormals</span><kbd>Alt N</kbd><i class="tri"></i></button>
        <button><span>Shad<u>i</u>ng</span><i class="tri"></i></button>
        <button><span><u>W</u>eights</span><i class="tri"></i></button>
        <button><span>S<u>o</u>rt Elements...</span><i class="tri"></i></button>
        <hr>
        <button><span>Show/<u>H</u>ide</span><i class="tri"></i></button>
        <button><span>Clean <u>U</u>p</span><i class="tri"></i></button>
        <hr>
        <button><span>Delete</span><kbd>X</kbd><i class="tri"></i></button>
    </div>

    <div class="popup normals-menu" role="menu">
        <button><span><u>F</u>lip</span></button>
        <button class="hot"><span><u>R</u>ecalculate Outside</span><kbd>Shift N</kbd></button>
        <button><span>Recalculate <u>I</u>nside</span><kbd>Shift Ctrl N</kbd></button>
        <hr>
        <button><span><u>S</u>et From Faces</span></button>
        <button><span>R<u>o</u>tate...</span></button>
        <button><span><u>P</u>oint to Target...</span><kbd>Alt L</kbd></button>
        <button><span><u>M</u>erge</span></button>
        <button><span>Sp<u>l</u>it</span></button>
        <button><span><u>A</u>verage</span><i class="tri"></i></button>
        <hr>
        <button><span><u>C</u>opy Vectors</span></button>
        <button><span>Paste <u>V</u>ectors</span></button>
        <button><span>Smoo<u>t</u>h Vectors</span></button>
        <button><span>R<u>e</u>set Vectors</span></button>
        <hr>
        <button><span>Select <u>b</u>y Face Strength</span><i class="tri"></i></button>
        <button><span>Set Face Stre<u>n</u>gth</span><i class="tri"></i></button>
    </div>

    <div class="tooltip" role="tooltip">Hace que las normales de caras y vértices apunten hacia afuera o hacia adentro de la malla.</div>

    <!-- highlighter strokes -->
    <svg class="marks" viewBox="0 0 1530 770">
        <g fill="none" stroke="#fff200" stroke-width="5" stroke-linecap="round">
            <path d="M427 125q30 0 59 3"/>
            <path d="M661 176l281 2"/>
            <path d="M434 582q100 1 208 4"/>
            <path d="M657 181q150 0 292 3" stroke-width="1.500"/>
        </g>
    </svg>

    <script src="script.js"></script>
</body>
</html>
```
FILE: styles.css
```css
* { box-sizing: border-box; }
body {
    display: flex;
    flex-direction: column;
    position: relative;
    height: 100vh;
    margin: 0;
    overflow: hidden;
    background-color: #1f1f1f;
    color: #d8d8d8;
    font-family: "DejaVu Sans", sans-serif;
    font-size: 14px;
    line-height: 20px;
    white-space: nowrap;
}
button, input, select {
    margin: 0;
    border: none;
    background: none;
    color: inherit;
    font: inherit;
}
button {
    display: flex;
    align-items: center;
    justify-content: center;
    padding: 0;
    text-shadow: 0 1px 1px rgba(0, 0, 0, 0.5);
}
.sprite { position: absolute; width: 0; height: 0; }
.icon { width: 20px; height: 20px; flex: none; }
.chev { width: 10px; height: 20px; flex: none; color: #e6e6e6; }

.titlebar {
    display: flex;
    align-items: flex-start;
    gap: 5px;
    flex: 0 0 19px;
    overflow: hidden;
    background-color: #ff8c00;
    color: #1a1000;
    font-family: "Noto Sans", sans-serif;
    line-height: 10px;
}
.title-logo { width: 18px; height: 18px; flex: none; margin-top: -5px; }

.topbar {
    display: flex;
    align-items: center;
    flex: 0 0 38px;
    padding: 0 0 2px 8px;
    background-color: #232323;
}
.logo { width: 26px; height: 26px; color: #d8d8d8; }
.menus { display: flex; gap: 2px; }
.menus button { height: 27px; padding: 0 10px; }
.menus .open {
    border-radius: 4px 4px 0 0;
    background-color: #4f77b5;
    color: #fff;
}
.topbar .menus { margin-left: 1px; }
.tabs { display: flex; gap: 2px; align-self: flex-end; margin-left: 24px; }
.tab {
    height: 28px;
    padding: 0 13px;
    border-radius: 5px 5px 0 0;
    background-color: #2a2a2a;
    color: #989898;
}
.tab.active { background-color: #424242; color: #fff; }
.tab.plus { width: 26px; padding: 0; }
.plus svg { width: 14px; height: 14px; }

/* grouped controls */
.cluster { display: flex; align-items: center; gap: 8px; }
.end { margin-left: auto; }
.group {
    display: flex;
    height: 27px;
    border: 1px solid #414141;
    border-radius: 5px;
    overflow: hidden;
    gap: 1px;
    background-color: #3a3a3a;
}
.cell { width: 26px; background-color: #565656; color: #c8c8c8; flex: none; }
.cell.on { background-color: #4f77b5; }
.pick { width: 42px; gap: 2px; padding-left: 2px; background-color: #282828; flex: none; }
.box { height: 27px; border: 1px solid #414141; border-radius: 5px; }
.more { width: 25px; padding: 0; }
.dim { background-color: #373737; color: #888; }
.dim .chev { color: #555; }
.group input { min-width: 0; padding: 0 9px; background-color: #1d1d1d; color: #e6e6e6; }
.scene-pick { width: 167px; margin-left: auto; border-right: none; border-radius: 5px 0 0 5px; }
.scene-pick input { flex: 1; }
.dropdown {
    display: flex;
    align-items: center;
    height: 27px;
    padding: 0 4px;
    border: 1px solid #414141;
    border-radius: 5px;
    background-color: #282828;
}
.dropdown select { flex: 1; min-width: 0; padding: 0 9px; appearance: none; outline: none; }

.workspace { display: flex; flex: 1; gap: 3px; min-height: 0; }
.left { display: flex; flex-direction: column; flex: 1; min-width: 0; }
.bar {
    display: flex;
    align-items: center;
    gap: 8px;
    height: 35px;
    padding: 0 12px 0 8px;
    flex: none;
    background-color: #383838;
}
.tool-settings {
    display: grid;
    grid-template-columns: 522px auto 1fr;
    background-color: #424242;
    border-radius: 0 6px 0 0;
}
.tool-settings .end { justify-self: end; }
.active-tool { width: 32px; height: 32px; margin: 0 12px 0 7px; }
.orient { width: 110px; }
.xyz .cell { width: 21px; }
.options { width: 87px; gap: 9px; }

.viewport {
    display: flex;
    flex-direction: column;
    position: relative;
    flex: 1;
    min-height: 0;
    overflow: hidden;
    border-radius: 0 0 6px 6px;
}
.scene { position: absolute; inset: 0; width: 100%; height: 100%; }
.view-header {
    display: flex;
    align-items: center;
    gap: 8px;
    position: relative;
    height: 35px;
    flex: none;
    padding: 0 12px 0 8px;
    background-color: rgba(45, 45, 45, 0.5);
}
.view-header .menus { margin-left: -3px; }
.mode { width: 153px; }
.view-body {
    display: flex;
    position: relative;
    flex: 1;
    min-height: 0;
    padding: 12px 0 0 7px;
}
.toolbar { display: flex; flex-direction: column; gap: 5px; width: 58px; flex: none; }
.tool-group {
    display: flex;
    flex-direction: column;
    gap: 1px;
    flex: none;
    overflow: hidden;
    border: 1px solid #383838;
    border-radius: 5px;
    background-color: #383838;
}
.tool-group button { position: relative; height: 48px; padding-right: 4px; background-color: #303030; }
.tool-group .on { background-color: #5680c2; }
.tool-group svg { width: 32px; height: 32px; }
.more-tools::after {
    content: "";
    position: absolute;
    right: 4px;
    bottom: 4px;
    width: 5px;
    height: 5px;
    background: linear-gradient(135deg, transparent 50%, #777 50%);
}
.view-info {
    margin-left: 24px;
    color: #fff;
    line-height: 26px;
    text-shadow: 0 1px 2px #000;
}
.nav {
    display: flex;
    flex-direction: column;
    align-items: flex-end;
    gap: 4px;
    margin-left: auto;
    margin-right: 12px;
    padding-top: 2px;
}
.axes { width: 100px; height: 108px; margin-right: 7px; }
.axes text { fill: #1c2a3a; font-size: 14px; text-anchor: middle; }
.nav button { width: 38px; height: 38px; border-radius: 50%; background-color: rgba(35, 35, 35, 0.6); }
.nav button svg { width: 23px; height: 23px; color: #ddd; }
.side-tab {
    position: absolute;
    right: 0;
    top: 22px;
    width: 12px;
    height: 20px;
    border-radius: 4px 0 0 4px;
    background-color: #232323;
}
.side-tab svg { width: 7px; height: 12px; }
.redo-panel {
    position: absolute;
    left: 83px;
    bottom: 7px;
    width: 400px;
    height: 82px;
    padding: 6px 9px;
    border: 1px solid #1a1a1a;
    border-radius: 5px;
    background-color: rgba(31, 31, 31, 0.95);
    color: #9a9a9a;
}
.redo-panel h2 { margin: 0 0 20px; font-size: 16px; font-weight: normal; color: #a8a8a8; }
.redo-panel h2::before {
    content: "";
    display: inline-block;
    margin: 0 9px 2px 3px;
    border: 4px solid transparent;
    border-top: 9px solid #888;
    border-bottom: none;
}
.redo-panel label { display: flex; align-items: center; gap: 4px; margin-left: 149px; }
input[type="checkbox"] {
    appearance: none;
    width: 19px;
    height: 19px;
    flex: none;
    border: 1px solid #555;
    border-radius: 4px;
    background-color: #666;
}

.node-editor { flex: 0 0 120px; padding-top: 3px; }
.node-bar { border-radius: 6px 6px 0 0; }
.node-bar .menus { margin-left: -1px; }
.shader-type { width: 123px; }
.use-nodes { display: flex; align-items: center; gap: 4px; margin-left: 1px; width: 103px; }
.use-nodes input { width: 17px; background-color: #4f77b5; }
.slot { width: 134px; margin-left: 9px; padding-left: 18px; }
.material { width: 295px; }
.material input { flex: 1; }
.pin { margin-left: 2px; }
.solo { height: 27px; border-radius: 4px; background-color: #484848; }
.node-canvas { position: relative; height: 82px; overflow: hidden; background-color: #232323; }
.node-grid { width: 100%; height: 100%; }
.node {
    position: absolute;
    top: 70px;
    height: 30px;
    overflow: hidden;
    background-color: #404040;
    color: #ddd;
    font-size: 4px;
    line-height: 6px;
}
.node span { display: block; padding-left: 3px; }
.principled { left: 708px; width: 86px; border: 1px solid #e0580f; }
.principled span { background-color: #2b8d5e; }
.output { left: 812px; width: 50px; border: 1px solid #eee; }
.output span { background-color: #7d2530; }
.edge-arrow { position: absolute; top: 24px; width: 7px; height: 12px; }
.start { left: 0; }
.finish { right: 1px; }

.right { display: flex; flex-direction: column; gap: 3px; flex: 0 0 100px; overflow: hidden; }
.right .bar { padding-left: 11px; border-radius: 6px 0 0 0; }
.outliner { position: relative; height: 201px; background-color: #282828; overflow: hidden; }
.tree { margin: 0; padding: 1px 0 0; list-style: none; }
.tree li { display: flex; align-items: center; height: 28px; }
.tree li:nth-child(even) { background-color: #2d2d2d; }
.tree li.selected { background-color: #3a5a9a; color: #f0a030; }
.tree-lines { position: absolute; left: 0; top: 35px; width: 100px; height: 170px; }
.badge {
    display: flex;
    padding: 2px 3px;
    border: 1px solid #555;
    border-radius: 5px;
    background-color: #3c3c3c;
}
.root { padding-left: 28px; gap: 5px; }
.lvl1 { gap: 9px; padding-left: 37px; }
.lvl1 .tri { margin-right: 6px; }
.lvl1 input { position: relative; width: 14px; height: 14px; border: none; border-radius: 2px; background-color: #e0e0e0; }
.lvl1 input::after {
    content: "";
    position: absolute;
    left: 5px;
    top: 1px;
    width: 5px;
    height: 10px;
    border: solid #222;
    border-width: 0 2px 2px 0;
    transform: rotate(40deg);
}
.lvl1 .icon { margin-left: 1px; }
.lvl2 { gap: 14px; padding-left: 66px; color: #96643c; }
.tri {
    display: block;
    flex: none;
    border: 4px solid transparent;
    border-left: 8px solid #999;
    border-right: none;
}
.tri.down { border: 4px solid transparent; border-top: 9px solid #aaa; border-bottom: none; }

.properties { display: flex; flex-direction: column; flex: 1; min-height: 0; }
.crumb { margin-left: 11px; }
.props-body { display: flex; flex: 1; min-height: 0; }
.prop-tabs {
    display: flex;
    flex-direction: column;
    gap: 2px;
    width: 38px;
    flex: none;
    padding: 12px 0 0 1px;
    background-color: #212121;
}
.prop-tabs button { height: 37px; flex: none; border-radius: 5px 0 0 5px; background-color: #2b2b2b; color: #c0c0c0; }
.prop-tabs .last { margin-bottom: 11px; }
.prop-panels { flex: 1; min-width: 0; overflow: hidden; background-color: #424242; }
.slots { height: 136px; margin: 12px 0 8px 12px; padding: 6px; border-radius: 5px 0 0 5px; background-color: #353535; }
.slot-row {
    display: flex;
    align-items: center;
    gap: 14px;
    height: 26px;
    margin-right: -6px;
    padding-left: 2px;
    border-radius: 4px 0 0 4px;
    background-color: #5b6272;
    color: #fff;
}
.ball { width: 18px; height: 18px; flex: none; border-radius: 50%; background: radial-gradient(circle at 35% 45%, #eee, #ccc 60%, #888); }
.slots .tri { margin: 87px 0 0 9px; }
.assign { justify-content: flex-start; width: 100%; height: 26px; margin: 0 0 8px 12px; padding-left: 46px; border-radius: 5px 0 0 5px; background-color: #585858; }
.mat { margin-left: 12px; border: none; }
.panel-head {
    display: flex;
    align-items: center;
    gap: 10px;
    height: 33px;
    margin: 0;
    padding-left: 12px;
    background-color: #424242;
    font-size: 16px;
    font-weight: normal;
}
.mat + .panel-head { margin-top: 12px; }
.panel-body { height: 143px; padding: 116px 0 0 31px; background-color: #383838; }
.sub-head { display: flex; align-items: center; gap: 10px; font-size: 14px; }

.popup {
    display: flex;
    flex-direction: column;
    position: absolute;
    padding: 4px 0;
    border: solid #191919;
    border-width: 0 1px;
    background-color: rgba(32, 32, 32, 0.96);
    box-shadow: 0 2px 5px rgba(0, 0, 0, 0.5);
    color: #e4e4e4;
}
.mesh-menu { left: 426px; top: 124px; bottom: 0; width: 223px; overflow: hidden; }
.normals-menu { left: 649px; top: 119px; width: 301px; border-radius: 5px; }
.popup button {
    justify-content: flex-start;
    position: relative;
    height: 26px;
    flex: none;
    margin: 1px 0;
    padding: 0 15px 0 39px;
}
.popup .hot { background-color: #4f77b5; color: #fff; }
.popup u { text-decoration-color: #999; text-decoration-thickness: 1px; text-underline-offset: 3px; }
.popup kbd { margin-left: auto; color: #848484; font: inherit; }
.popup .hot kbd { color: #9fb1d0; }
.popup .tri { position: absolute; right: 4px; top: 9px; }
.popup .hot .tri { border-left-color: #b9c8e2; }
.popup hr { width: 100%; height: 1px; flex: none; margin: 6px 0 5px; border: none; background-color: #3b3b3b; }

.tooltip {
    position: absolute;
    left: 914px;
    top: 191px;
    width: 613px;
    padding: 15px 18px 11px;
    border-radius: 5px;
    background-color: rgba(25, 25, 26, 0.95);
    box-shadow: 0 2px 5px rgba(0, 0, 0, 0.5);
    color: #e4e4e4;
    line-height: 21px;
    white-space: normal;
}
.marks { position: absolute; left: 0; top: 0; width: 1530px; height: 770px; pointer-events: none; }
```
FILE: script.js
```javascript
const svgNS = 'http://www.w3.org/2000/svg';

function addLine(parent, a, b, color, width) {
    const line = document.createElementNS(svgNS, 'line');
    line.setAttribute('x1', a[0]);
    line.setAttribute('y1', a[1]);
    line.setAttribute('x2', b[0]);
    line.setAttribute('y2', b[1]);
    line.setAttribute('stroke', color);
    line.setAttribute('stroke-width', width);
    parent.appendChild(line);
}

// ground plane -> screen
function depth(x, y) {
    return 1 - 0.0565 * x + 0.054 * y;
}
function project(x, y) {
    const d = depth(x, y);
    return [(738.5 + 18.77 * x + 103.7 * y) / d, (376.7 + 7.07 * x - 6.3 * y) / d];
}

const floor = document.getElementById('floor');
const near = 0.15;
const far = 60;

function floorLine(i, alongX, color, width) {
    let a, b;
    if (alongX) {
        const end = (1 + 0.054 * i - near) / 0.0565;
        a = project(-far, i);
        b = project(end, i);
    } else {
        const start = (near - 1 + 0.0565 * i) / 0.054;
        a = project(i, start);
        b = project(i, far);
    }
    addLine(floor, a, b, color, width);
}

for (let i = -34; i <= 34; i++) {
    if (i === 0) continue;
    // distant lines fade out
    let color = Math.abs(i) > 16 ? '#434343' : '#494949';
    if (i % 10 === 0) color = '#505050';
    if (i > -14) floorLine(i, true, color, 1.4);
    if (i < 14) floorLine(i, false, color, 1.4);
}
floorLine(0, true, '#a83c4b', 1.7);
floorLine(0, false, '#66902a', 1.7);

// node editor background
const nodeGrid = document.getElementById('nodeGrid');
for (let i = 0; i < 200; i++) {
    const pos = 12.5 + (i - 1) * 7.3;
    const color = (i - 1) % 5 === 0 ? '#151515' : '#1c1c1c';
    addLine(nodeGrid, [pos, 0], [pos, 82], color, 1);
    if (i < 13) {
        const y = 31.5 + (i - 5) * 7.3;
        addLine(nodeGrid, [0, y], [1500, y], i % 5 === 0 ? '#151515' : '#1c1c1c', 1);
    }
}
```
